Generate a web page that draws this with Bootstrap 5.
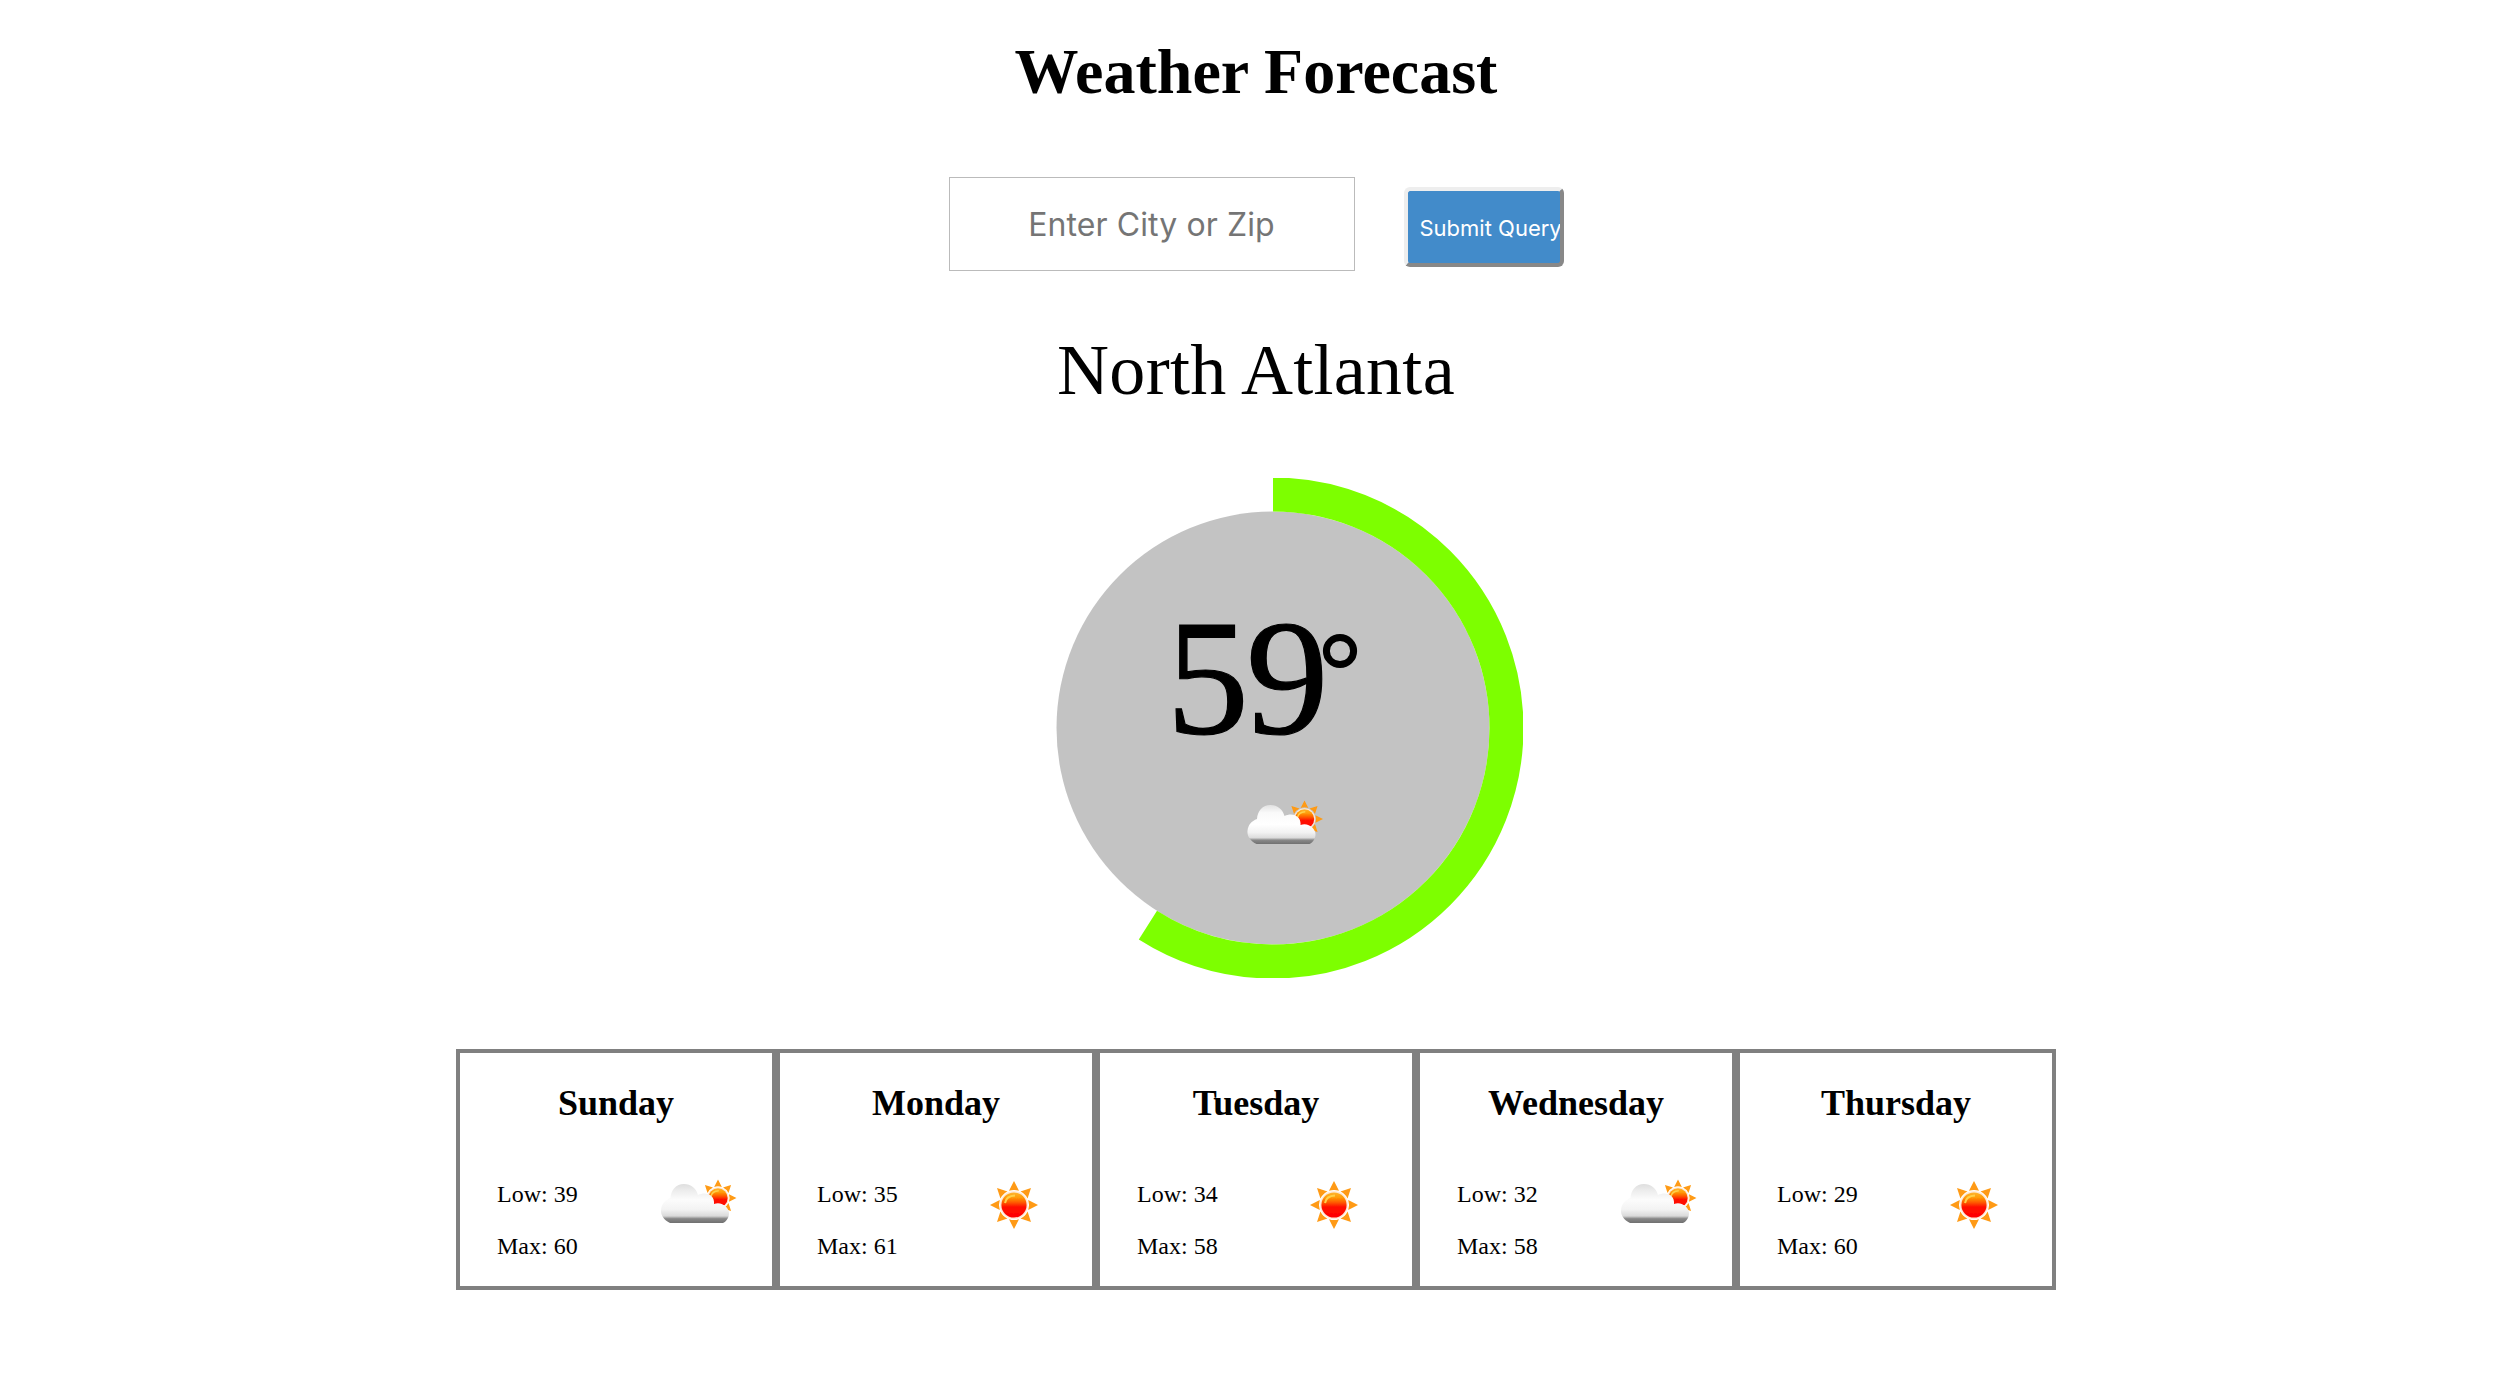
<!DOCTYPE html>
<html lang="en">
<head>
<meta charset="utf-8">
<title>Weather Forecast</title>
<link href="https://cdn.jsdelivr.net/npm/bootstrap@5.3.0/dist/css/bootstrap.min.css" rel="stylesheet">
<style>
body { font-family: "Liberation Serif", "Times New Roman", serif; color: #000; background: #fff; }
.weather-page { padding-right: 2px; }
.page-title { font-size: 64px; line-height: 74px; padding-top: 35px; }
.search-form { padding-top: 68px; gap: 49px; }
.search-form .city-input { width: 406px; height: 94px; padding: 1px 0 0; border: 1px solid #bbb; border-radius: 0; font: 32px/40px Inter, "Noto Sans", sans-serif; color: #000; letter-spacing: .1px; }
.city-input::placeholder { color: #757575; opacity: 1; }
.search-form .submit-btn { width: 160px; height: 80px; margin-top: 10px; padding: 2px 0 0 12px; border: 4px solid; border-color: #eee #888 #888 #eee; border-radius: 6px; background: #428bca; color: #fff; font: 22px/30px Inter, "Noto Sans", sans-serif; overflow: hidden; white-space: nowrap; text-align: left; }
.city-name { font-size: 72px; line-height: 82px; padding-top: 58px; letter-spacing: .3px; }
.gauge { width: 500px; height: 500px; margin: 67px 0 0 34px; }
.forecast { width: 1600px; margin-top: 71px; }
.forecast .day-card { width: 320px; height: 241px; border: 4px solid #808080; border-radius: 0; }
.day-name { font-size: 36px; line-height: 44px; padding-top: 28px; }
.day-info { padding: 44px 22px 0 37px; font-size: 24px; line-height: 51.7px; }
.day-icon { width: 100px; height: 60px; margin-top: 2px; }
</style>
</head>
<body>
<svg class="position-absolute" width="0" height="0" aria-hidden="true">
  <defs>
    <linearGradient id="cloudFill" x1="0" y1="13" x2="0" y2="52" gradientUnits="userSpaceOnUse">
      <stop offset="0" stop-color="#dedede"/><stop offset=".16" stop-color="#ececec"/><stop offset=".4" stop-color="#fcfcfc"/><stop offset=".65" stop-color="#f3f3f3"/><stop offset=".82" stop-color="#dadada"/><stop offset=".89" stop-color="#888"/><stop offset="1" stop-color="#707070"/>
    </linearGradient>
    <linearGradient id="cloudFillLit" x1="0" y1="13" x2="0" y2="52" gradientUnits="userSpaceOnUse">
      <stop offset="0" stop-color="#e2e2e2"/><stop offset=".2" stop-color="#fafafa"/><stop offset=".5" stop-color="#fff"/><stop offset=".7" stop-color="#f3f3f3"/><stop offset=".84" stop-color="#dcdcdc"/><stop offset=".9" stop-color="#888"/><stop offset="1" stop-color="#707070"/>
    </linearGradient>
    <linearGradient id="sunFill" x1="0" y1="0" x2="0" y2="1">
      <stop offset="0" stop-color="#ffb52e"/><stop offset=".2" stop-color="#ff9c08"/><stop offset=".4" stop-color="#ff5a00"/><stop offset=".58" stop-color="#ff1000"/><stop offset="1" stop-color="#f00"/>
    </linearGradient>
    <filter id="soft" x="-10%" y="-10%" width="120%" height="120%"><feGaussianBlur stdDeviation=".7"/></filter>
    <path id="ray" d="M0-24 5-14.2Q0-16-5-14.2Z"/>
    <g id="sunShape">
      <g fill="#ff9a12">
        <use href="#ray"/><use href="#ray" transform="rotate(45)"/><use href="#ray" transform="rotate(90)"/><use href="#ray" transform="rotate(135)"/>
        <use href="#ray" transform="rotate(180)"/><use href="#ray" transform="rotate(225)"/><use href="#ray" transform="rotate(270)"/><use href="#ray" transform="rotate(315)"/>
      </g>
      <circle r="14" fill="#ffe9d6"/>
      <circle r="12.6" fill="url(#sunFill)"/>
      <path d="M-9-2Q-8-9 1-9.5" fill="none" stroke="#ffd04a" stroke-width="2"/>
    </g>
    <path id="cloudShape" d="M20 52C14 49 10.5 44 11 39C11.5 33 15 29 20.5 27C21 19 26 13 34 13C41 13 46 17 48 24C56 20 65 24 64 33C72 30 79 37 79 42C79 46 77 50 73 52Z"/>
    <symbol id="sunny" viewBox="0 0 100 60"><g filter="url(#soft)"><use href="#sunShape" transform="translate(44 34)"/></g></symbol>
    <symbol id="partly" viewBox="0 0 100 60"><g filter="url(#soft)"><use href="#sunShape" transform="translate(68 27) scale(.77)"/><use href="#cloudShape" fill="url(#cloudFill)"/></g></symbol>
    <symbol id="partlyLit" viewBox="0 0 100 60"><g filter="url(#soft)"><use href="#sunShape" transform="translate(68 27) scale(.77)"/><use href="#cloudShape" fill="url(#cloudFillLit)"/></g></symbol>
  </defs>
</svg>
<main class="weather-page d-flex flex-column align-items-center">
  <h1 class="page-title fw-bold text-center m-0">Weather Forecast</h1>
  <form class="search-form d-flex align-items-start justify-content-center">
    <input type="text" class="form-control city-input text-center" placeholder="Enter City or Zip">
    <button type="button" class="btn submit-btn">Submit Query</button>
  </form>
  <div class="city-name text-center">North Atlanta</div>
  <svg class="gauge d-block" viewBox="0 0 500 500" role="img" aria-label="59 degrees">
    <circle cx="250" cy="250" r="216.5" fill="#c3c3c3"/>
    <circle cx="250" cy="250" r="233.5" fill="none" stroke="#7dff00" stroke-width="34" pathLength="100" stroke-dasharray="59 41" transform="rotate(-90 250 250)"/>
    <text x="143.5" y="254.5" font-size="165" textLength="162" font-family="Liberation Serif, serif" stroke="#000" stroke-width="1.2">59</text>
    <circle cx="317" cy="173" r="13.6" fill="none" stroke="#000" stroke-width="7"/>
    <use href="#partlyLit" x="213.5" y="314" width="100" height="60"/>
  </svg>
  <section class="forecast d-flex">
    <div class="card day-card"><h3 class="day-name fw-bold text-center m-0">Sunday</h3><div class="day-info d-flex justify-content-between align-items-start"><div><div>Low: 39</div><div>Max: 60</div></div><svg class="day-icon"><use href="#partly"/></svg></div></div>
    <div class="card day-card"><h3 class="day-name fw-bold text-center m-0">Monday</h3><div class="day-info d-flex justify-content-between align-items-start"><div><div>Low: 35</div><div>Max: 61</div></div><svg class="day-icon"><use href="#sunny"/></svg></div></div>
    <div class="card day-card"><h3 class="day-name fw-bold text-center m-0">Tuesday</h3><div class="day-info d-flex justify-content-between align-items-start"><div><div>Low: 34</div><div>Max: 58</div></div><svg class="day-icon"><use href="#sunny"/></svg></div></div>
    <div class="card day-card"><h3 class="day-name fw-bold text-center m-0">Wednesday</h3><div class="day-info d-flex justify-content-between align-items-start"><div><div>Low: 32</div><div>Max: 58</div></div><svg class="day-icon"><use href="#partly"/></svg></div></div>
    <div class="card day-card"><h3 class="day-name fw-bold text-center m-0">Thursday</h3><div class="day-info d-flex justify-content-between align-items-start"><div><div>Low: 29</div><div>Max: 60</div></div><svg class="day-icon"><use href="#sunny"/></svg></div></div>
  </section>
</main>
<script src="https://cdn.jsdelivr.net/npm/bootstrap@5.3.0/dist/js/bootstrap.bundle.min.js"></script>
</body>
</html>
